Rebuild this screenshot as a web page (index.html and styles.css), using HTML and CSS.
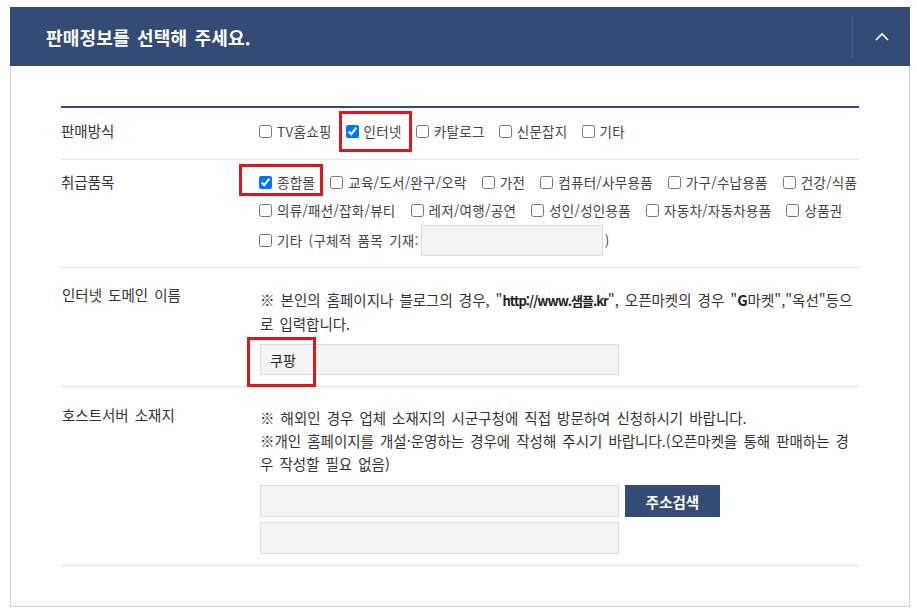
FILE: index.html
```html
<!DOCTYPE html>
<html lang="ko">
  <head>
    <meta charset="utf-8" />
    <title>판매정보</title>
    <link rel="stylesheet" href="styles.css">
  </head>

  <body>
    <div id="panel">
      <div class="panel-head">
        <h2>판매정보를 선택해 주세요.</h2>
        <button class="toggle" type="button" aria-label="접기">
          <svg width="14" height="9" viewBox="0 0 14 9">
            <path d="M1 8 L7 2 L13 8" fill="none" stroke="#fff" stroke-width="1.6" />
          </svg>
        </button>
      </div>

      <div class="panel-body">
        <div class="form-table">
          <div class="row row-method">
            <div class="label">판매방식</div>
            <div class="field options">
              <label class="opt"><input type="checkbox" />TV홈쇼핑</label>
              <label class="opt marked mark-net"><input type="checkbox" checked />인터넷</label>
              <label class="opt"><input type="checkbox" />카탈로그</label>
              <label class="opt"><input type="checkbox" />신문잡지</label>
              <label class="opt"><input type="checkbox" />기타</label>
            </div>
          </div>

          <div class="row row-items">
            <div class="label">취급품목</div>
            <div class="field options">
              <label class="opt marked mark-mall"><input type="checkbox" checked />종합몰</label>
              <label class="opt"><input type="checkbox" />교육/도서/완구/오락</label>
              <label class="opt"><input type="checkbox" />가전</label>
              <label class="opt"><input type="checkbox" />컴퓨터/사무용품</label>
              <label class="opt"><input type="checkbox" />가구/수납용품</label>
              <label class="opt"><input type="checkbox" />건강/식품</label>
              <label class="opt"><input type="checkbox" />의류/패션/잡화/뷰티</label>
              <label class="opt"><input type="checkbox" />레저/여행/공연</label>
              <label class="opt"><input type="checkbox" />성인/성인용품</label>
              <label class="opt"><input type="checkbox" />자동차/자동차용품</label>
              <label class="opt"><input type="checkbox" />상품권</label>
              <label class="opt opt-etc"><input type="checkbox" />기타 (구체적 품목 기재:<input type="text" class="text etc-input" />)</label>
            </div>
          </div>

          <div class="row row-domain">
            <div class="label">인터넷 도메인 이름</div>
            <div class="field">
              <p class="note">※ 본인의 홈페이지나 블로그의 경우, "<b class="url">http://www.샘플.kr</b>", 오픈마켓의 경우 "<b>G</b>마켓","옥선"등으로 입력합니다.</p>
              <div class="marked mark-domain">
                <input type="text" class="text wide" value="쿠팡" />
              </div>
            </div>
          </div>

          <div class="row row-host">
            <div class="label">호스트서버 소재지</div>
            <div class="field">
              <p class="note">※ 해외인 경우 업체 소재지의 시군구청에 직접 방문하여 신청하시기 바랍니다.<br />※개인 홈페이지를 개설·운영하는 경우에 작성해 주시기 바랍니다.(오픈마켓을 통해 판매하는 경우 작성할 필요 없음)</p>
              <div class="addr-line">
                <input type="text" class="text wide" />
                <button type="button" class="btn-search">주소검색</button>
              </div>
              <div class="addr-line">
                <input type="text" class="text wide" />
              </div>
            </div>
          </div>
        </div>
      </div>
    </div>
  </body>
</html>
```

FILE: styles.css
```css
body {
  margin: 0;
  padding: 0;
  background-color: #fff;
  color: #333;
  font-family: "Noto Sans CJK KR", "Noto Sans", sans-serif;
  font-size: 14px;
}

#panel {
  width: 900px;
  margin: 7px 0 0 10px;
}

.panel-head {
  display: flex;
  align-items: center;
  height: 59px;
  background-color: #344b76;
  color: #fff;
}

.panel-head h2 {
  flex: 1;
  margin: 0;
  padding-left: 36px;
  font-size: 18px;
  font-weight: bold;
  letter-spacing: 0.2px;
  word-spacing: 2px;
}

.toggle {
  width: 58px;
  height: 42px;
  padding: 0;
  border: 0;
  border-left: 1px solid #4b6089;
  background: none;
  display: flex;
  align-items: center;
  justify-content: center;
}

.panel-body {
  border: 1px solid #d4d4d4;
  border-top: 0;
  padding: 40px 50px 40px 50px;
}

.form-table {
  border-top: 2px solid #344b76;
}

.row {
  display: flex;
  align-items: flex-start;
  border-bottom: 1px solid #e6e6e6;
}

.label {
  width: 198px;
  padding-left: 1px;
  font-size: 14.5px;
  line-height: 20px;
  word-spacing: 2px;
  color: #333;
}

.field {
  flex: 1;
}

.options {
  display: flex;
  flex-wrap: wrap;
  column-gap: 15px;
}

.opt {
  display: inline-flex;
  align-items: center;
  height: 28px;
  font-size: 13.5px;
  letter-spacing: 0.3px;
  word-spacing: 2px;
  color: #444;
}

.opt input[type="checkbox"] {
  width: 13px;
  height: 13px;
  margin: 0 5px 0 0;
}

.row-method .options {
  column-gap: 14px;
}

.row-method .label,
.row-items .label {
  line-height: 28px;
}

.row-method .label,
.row-method .field {
  padding: 9px 0 14px;
}

.row-items .label,
.row-items .field {
  padding: 8px 0 11px;
}

.opt-etc {
  height: 32px;
}

.text {
  box-sizing: border-box;
  height: 31px;
  border: 1px solid #dcdcdc;
  background-color: #f4f4f4;
  font-family: inherit;
  font-size: 14px;
  color: #222;
  padding: 0 9px;
}

.etc-input {
  width: 182px;
  height: 31px;
  margin: 0 2px 0 2px;
}

.wide {
  width: 359px;
}

.note {
  margin: 0 0 10px;
  font-size: 14.5px;
  line-height: 23px;
  word-spacing: 2px;
  color: #333;
}

.note b {
  color: #222;
}

.note .url {
  font-size: 13px;
  letter-spacing: -1px;
  word-spacing: 0;
}

.row-domain .label {
  padding-top: 17px;
}

.row-domain .field {
  padding: 20px 0 11px;
}

.row-domain .note {
  margin-bottom: 9px;
}

.row-host .label {
  padding-top: 18px;
}

.row-host .field {
  padding: 19px 0 11px;
}

.addr-line {
  display: flex;
  margin-top: 5px;
}

.note + .addr-line {
  margin-top: 0;
}

.addr-line .text {
  height: 32px;
}

.btn-search {
  width: 95px;
  height: 32px;
  margin-left: 6px;
  border: 0;
  background-color: #344b76;
  color: #fff;
  font-family: inherit;
  font-size: 14.5px;
  font-weight: bold;
}

/* red highlight boxes drawn over the form */
.marked {
  position: relative;
}

.marked::after {
  content: "";
  position: absolute;
  border: 3px solid #e0161f;
  pointer-events: none;
}

.mark-net::after {
  left: -7px;
  top: -6px;
  width: 67px;
  height: 35px;
}

.mark-mall::after {
  left: -20px;
  top: -4px;
  width: 78px;
  height: 26px;
}

.mark-domain {
  display: inline-block;
}

.mark-domain::after {
  left: -13px;
  top: -7px;
  width: 63px;
  height: 44px;
}
```
